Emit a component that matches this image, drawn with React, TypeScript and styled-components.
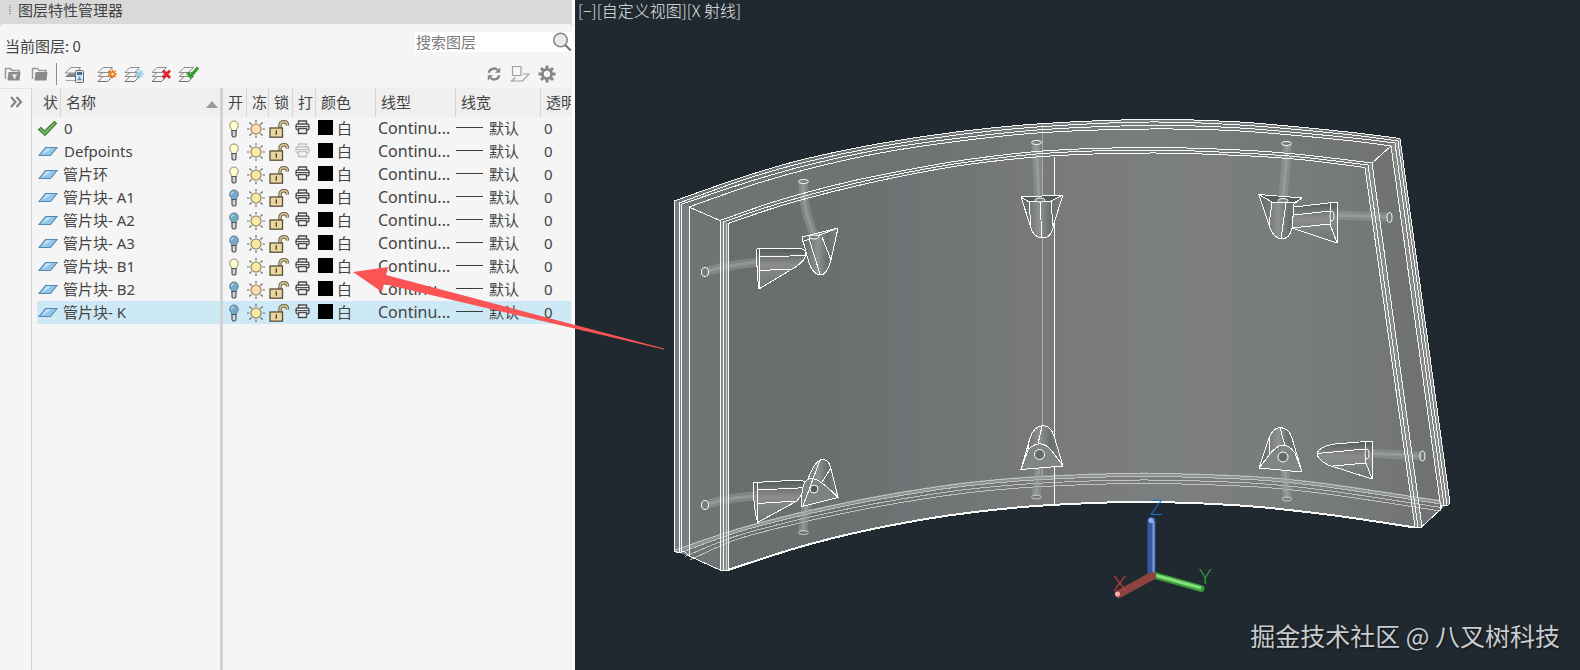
import React from "react";
import styled, { createGlobalStyle } from "styled-components";

const uiFont = `"Noto Sans", "Noto Sans CJK SC", sans-serif`;
const cjkFont = `"Noto Sans CJK SC", "Noto Sans", sans-serif`;

const GlobalStyle = createGlobalStyle`
  *, *::before, *::after { box-sizing: border-box; }
  body {
    margin: 0;
    background: #212930;
    color: #444444;
    font: 15px/20px ${uiFont};
  }
  button { border: 0; padding: 0; background: none; color: inherit; font: inherit; cursor: pointer; }
  svg { display: block; }
`;

/* ---------- page ---------- */

const Page = styled.div`
  position: relative;
  display: flex;
  min-height: 100vh;
  overflow: hidden;
`;

const Panel = styled.aside`
  display: flex;
  flex-direction: column;
  flex: 0 0 575px;
  background: #d9d9d9;
  border-right: 3px solid #fbfbfb;
`;

const TitleBar = styled.header`
  display: flex;
  align-items: center;
  gap: 6px;
  height: 24px;
  padding: 0 0 4px 8px;
`;

const Grip = styled.span`
  width: 4px;
  height: 10px;
  background: conic-gradient(#9a9a9a 25%, transparent 0) 0 0 / 3px 2px;
`;

const Title = styled.h1`
  margin: 0;
  font: 400 15px/20px ${cjkFont};
`;

const PanelBody = styled.div`
  display: flex;
  flex-direction: column;
  flex: 1;
  background: #f5f5f5;
  border-radius: 4px 4px 0 0;
`;

const TopRow = styled.div`
  display: flex;
  justify-content: space-between;
  height: 40px;
  padding: 8px 0 0 5px;
`;

const Current = styled.p`
  margin: 0;
  padding-top: 4px;
  font-family: ${cjkFont};
`;

const Search = styled.label`
  display: flex;
  align-items: flex-start;
  height: 20px;
  background: #ffffff;
`;

const SearchInput = styled.input`
  width: 137px;
  height: 20px;
  border: 0;
  padding: 0 0 1px 1px;
  background: transparent;
  outline: none;
  font: 15px/20px ${cjkFont};
  &::placeholder { color: #7c7c7c; opacity: 1; }
`;

const Toolbar = styled.div`
  display: flex;
  justify-content: space-between;
  height: 24px;
  padding: 0 16px 0 4px;
`;

const ToolGroup = styled.div<{ $gap: number }>`
  display: flex;
  align-items: center;
  gap: ${(p) => p.$gap}px;
  height: 20px;
`;

const ToolDivider = styled.span`
  width: 1px;
  height: 22px;
  background: #8c8c8c;
`;

const Content = styled.div`
  display: flex;
  flex: 1;
`;

const Rail = styled.div`
  display: flex;
  align-items: flex-start;
  justify-content: center;
  flex: 0 0 32px;
  padding-top: 7px;
  border-top: 1px solid #e2e2e2;
  border-right: 1px solid #d2d2d2;
`;

const Grid = styled.div`
  flex: 1;
  min-width: 0;
  padding-right: 1px;
  background: linear-gradient(#d2d2d2, #d2d2d2) 188px 0 / 3px 100% no-repeat;
`;

/* ---------- layer table ---------- */

const Table = styled.table`
  width: 100%;
  table-layout: fixed;
  border-collapse: separate;
  border-spacing: 0;
`;

const Th = styled.th<{ $pad: number; $edge?: "thick" | "none" }>`
  height: 29px;
  padding: 0 0 2px ${(p) => p.$pad}px;
  overflow: hidden;
  white-space: nowrap;
  text-align: left;
  font: 400 15px/20px ${cjkFont};
  background: #efefef;
  border-left: ${(p) =>
    p.$edge === "none" ? "0" : p.$edge === "thick" ? "3px solid #d2d2d2" : "1px solid #d6d6d6"};
`;

const HeadLine = styled.span`
  display: flex;
  align-items: flex-end;
  justify-content: space-between;
  padding-right: 2px;

  svg { margin-bottom: 4px; }
`;

const Row = styled.tr<{ $selected?: boolean }>`
  --row: ${(p) => (p.$selected ? "#cde9f6" : "transparent")};
`;

const Td = styled.td<{ $pad?: number; $edge?: boolean; $icon?: boolean }>`
  height: 23px;
  padding: 0 0 ${(p) => (p.$icon ? 0 : 2)}px ${(p) => p.$pad ?? 0}px;
  overflow: hidden;
  white-space: nowrap;
  line-height: 20px;
  background: var(--row);
  ${(p) => p.$edge && "border-left: 3px solid #d2d2d2;"}
`;

const StatusTd = styled(Td)`
  background-clip: content-box;
`;

const LinetypeTd = styled(Td)`
  font-size: 16px;
`;

const Toggle = styled.button`
  display: block;
`;

const Swatch = styled.span`
  width: 15px;
  height: 15px;
  background: #000000;
`;

const Inline = styled.span<{ $gap: number }>`
  display: flex;
  align-items: center;
  gap: ${(p) => p.$gap}px;
`;

const Weight = styled.span`
  width: 27px;
  height: 1px;
  background: #3c3c3c;
`;

/* ---------- viewport ---------- */

const Viewport = styled.main`
  position: relative;
  flex: 1;
  min-width: 0;
  background: #212930;
`;

const ViewLabel = styled.div`
  position: absolute;
  top: 0;
  left: 3px;
  color: #e6e8ea;
  font: 300 16px/20px ${cjkFont};
`;

const Watermark = styled.div`
  position: absolute;
  right: 20px;
  bottom: 17px;
  color: #c9cccf;
  font: 400 25px/36px ${cjkFont};
  text-shadow: 1px 1px 2px #0c1014;
`;

const Scene = styled.svg`
  width: 100%;
  height: auto;
`;

const ArrowLayer = styled.svg`
  position: absolute;
  top: 260px;
  left: 350px;
  pointer-events: none;
`;

/* ---------- icons ---------- */

const FolderIcon = ({ star }: { star?: boolean }) => (
  <svg width="18" height="16" viewBox="0 0 18 16">
    <path d="M1.500 13V2.500H6.500L8 4.500H15v2" fill="none" stroke="#9a9a9a" strokeWidth="1.500" />
    <path d="M4.500 6H16.500l-1 8.500H3.500z" fill="#8b8b8b" />
    {star && <path d="M7.500 8.500h6L11.500 10.500V12.500h-2v-2z" fill="#f4f4f4" />}
  </svg>
);

const Sheets = () => (
  <g fill="#f4f4f4" strokeWidth="1">
    <path d="M1 16.500 6 11.500H15.500L10.500 16.500z" stroke="#6f6f6f" />
    <path d="M1 11.500 6 7.500H15.500L10.500 11.500z" stroke="#8d8d8d" />
    <path d="M1 7.500 6 2.500H15.500L10.500 7.500z" stroke="#8d8d8d" />
  </g>
);

const LayerIcon = ({ kind }: { kind: "states" | "new" | "frozen" | "delete" | "current" }) => (
  <svg width="21" height="18" viewBox="0 0 21 18">
    {kind === "states" ? (
      <>
        <path d="M1 8 7 2.500H16.500L12 8z" fill="#f4f4f4" stroke="#8d8d8d" />
        <path d="M1 12 5 8.500H16V12z" fill="#808080" />
        <path d="M2 15.500H11" stroke="#a5a5a5" />
        <rect x="11.500" y="5.500" width="8" height="12" rx="1" fill="#dfe9f0" stroke="#5d6b78" />
        <rect x="13" y="7" width="5" height="3" fill="#3c6fa0" />
        <path d="M15.500 11.500v2M13.500 14.500h4" stroke="#4a86b8" strokeWidth="1.500" />
      </>
    ) : (
      <Sheets />
    )}
    {kind === "new" && (
      <g stroke="#ee7b1c" strokeWidth="1.500">
        <path d="M15.500 4.500v9M11 9h9M12.300 5.800l6.400 6.400M18.700 5.800l-6.400 6.400" />
        <circle cx="15.500" cy="9" r="2" fill="#fff3d8" />
      </g>
    )}
    {kind === "frozen" && (
      <path d="M15.500 4.500v9M11 9h9M12.300 5.800l6.400 6.400M18.700 5.800l-6.400 6.400" stroke="#9ccfe6" strokeWidth="1.500" />
    )}
    {kind === "delete" && <path d="M12 5.500l7 7.500M19 5.500l-7 7.500" stroke="#e8232f" strokeWidth="2.800" />}
    {kind === "current" && <path d="M9.500 7.500 12.500 11.500 20 2.500" fill="none" stroke="#33a02c" strokeWidth="3.200" />}
  </svg>
);

const RefreshIcon = () => (
  <svg width="16" height="16" viewBox="0 0 16 16" fill="none" stroke="#858585" strokeWidth="2.400">
    <path d="M2.800 6.800A5.200 5.200 0 0 1 11.500 4M13.200 9.200A5.200 5.200 0 0 1 4.500 12" />
    <path d="M14.200 1.500V6.800H9zM1.800 14.500V9.200H7z" fill="#858585" stroke="none" />
  </svg>
);

const ObjectIcon = () => (
  <svg width="20" height="18" viewBox="0 0 20 18" fill="none" stroke="#a0a0a0" strokeWidth="1.200">
    <path d="M2.500 1.500h8.500v9H2.500zM13 9h6L12.500 16H1.500L5.500 12.500" />
  </svg>
);

const GearIcon = () => (
  <svg width="18" height="18" viewBox="0 0 18 18">
    <g stroke="#858585" strokeWidth="3">
      <path d="M9 .5v17M.5 9h17M3 3l12 12M15 3 3 15" />
    </g>
    <circle cx="9" cy="9" r="6" fill="#858585" />
    <circle cx="9" cy="9" r="3.200" fill="#f5f5f5" />
  </svg>
);

const MagnifierIcon = () => (
  <svg width="20" height="20" viewBox="0 0 20 20">
    <circle cx="8.500" cy="8" r="6.800" fill="#e9e9e9" stroke="#858585" strokeWidth="1.500" />
    <path d="M13.200 13l5.600 5.500" stroke="#6f6f6f" strokeWidth="2" />
  </svg>
);

const ChevronsIcon = () => (
  <svg width="14" height="12" viewBox="0 0 14 12" fill="none" stroke="#858585" strokeWidth="2.200">
    <path d="M2 1l4.500 5L2 11M7.500 1 12 6l-4.500 5" />
  </svg>
);

const CheckIcon = () => (
  <svg width="21" height="17" viewBox="0 0 21 17">
    <path d="M1.500 9.500 4 7.500 7.500 11 17.500 1.500 19.500 3.500 8 15.500z" fill="#7ab568" stroke="#3d7c37" strokeWidth="1.100" />
  </svg>
);

const PlaneIcon = () => (
  <svg width="21" height="11" viewBox="0 0 21 11">
    <path d="M2 9.500 8.500 1.500H20L13.500 9.500z" fill="#93c6e8" stroke="#5089b3" strokeWidth="1.100" />
    <path d="M5 8.500 9.500 2.500h5z" fill="#c8e3f4" />
  </svg>
);

const BulbIcon = ({ on }: { on: boolean }) => (
  <svg width="12" height="18" viewBox="0 0 12 18">
    <path
      d="M6 1a4.300 4.300 0 0 0-4.300 4.500C1.700 8 4 8.500 4 11.500h4C8 8.500 10.300 8 10.300 5.500A4.300 4.300 0 0 0 6 1z"
      fill={on ? "#fefcd0" : "#77a9c6"}
      stroke={on ? "#8d8a6c" : "#5b7c90"}
      strokeWidth="1"
    />
    {!on && <path d="M3.500 5.500A2.500 2.500 0 0 1 6 3" fill="none" stroke="#c3deec" strokeWidth="1.200" />}
    <path d="M4 10.500h4v5.300L7 17H5l-1-1.200z" fill="#d3d6d8" stroke="#505458" strokeWidth="1.200" />
  </svg>
);

const SunIcon = ({ warm }: { warm?: boolean }) => (
  <svg width="18" height="18" viewBox="0 0 18 18">
    <path
      d="M9 0v2.500M9 15.500V18M0 9h2.500M15.500 9H18M2.500 2.500l2 2M13.500 13.500l2 2M15.500 2.500l-2 2M4.500 13.500l-2 2"
      stroke="#6d6a62"
      strokeWidth="1.200"
    />
    <circle cx="9" cy="9" r="5" fill={warm ? "#ffdcae" : "#f8eaa2"} stroke="#8c8263" strokeWidth="1.100" />
  </svg>
);

const LockIcon = () => (
  <svg width="21" height="18" viewBox="0 0 21 18">
    <path d="M11 8V5.500C11 2.800 12.700 1.800 14.800 1.800S18.500 3 18.500 5.500" fill="none" stroke="#6a6149" strokeWidth="3.400" />
    <path d="M11 8V5.500C11 2.800 12.700 1.800 14.800 1.800S18.500 3 18.500 5.500" fill="none" stroke="#ddcd98" strokeWidth="1.400" />
    <rect x="1" y="8" width="12.500" height="9.200" fill="#e9d6a2" stroke="#584f38" strokeWidth="1.300" />
    <path d="M7.300 10.300v4.500" stroke="#5c4c25" strokeWidth="1.400" />
  </svg>
);

const PrinterIcon = ({ dim }: { dim?: boolean }) => (
  <svg width="15" height="15" viewBox="0 0 15 15" opacity={dim ? 0.3 : 1}>
    <g fill="#f1f1f1" stroke="#484c50" strokeWidth="1.300">
      <path d="M3.500 4.500V1h8v3.500" />
      <rect x="1" y="4" width="13" height="6" rx="2" />
      <path d="M3.500 8.500h8v5h-8z" />
    </g>
    <path d="M1 6.500h13" stroke="#484c50" />
  </svg>
);

/* ---------- data ---------- */

type Layer = { name: string; on: boolean; current?: boolean; noPlot?: boolean; warm?: boolean; selected?: boolean };

const layers: Layer[] = [
  { name: "0", on: true, current: true, warm: true },
  { name: "Defpoints", on: true, noPlot: true },
  { name: "管片环", on: true },
  { name: "管片块- A1", on: false },
  { name: "管片块- A2", on: false },
  { name: "管片块- A3", on: false },
  { name: "管片块- B1", on: true },
  { name: "管片块- B2", on: false, warm: true },
  { name: "管片块- K", on: false, selected: true },
];

const columnWidths = [28, 160, 26, 22, 24, 23, 60, 80, 85];

const LayerTable = () => (
  <Table>
    <colgroup>
      {columnWidths.map((w, i) => (
        <col key={i} width={w} />
      ))}
      <col />
    </colgroup>
    <thead>
      <tr>
        <Th $pad={11} $edge="none">状</Th>
        <Th $pad={5}>
          <HeadLine>
            名称
            <svg width="12" height="7" viewBox="0 0 12 7">
              <path d="M0 7 6 0l6 7z" fill="#9a9a9a" />
            </svg>
          </HeadLine>
        </Th>
        <Th $pad={5} $edge="thick">开</Th>
        <Th $pad={5}>冻</Th>
        <Th $pad={5}>锁</Th>
        <Th $pad={5}>打</Th>
        <Th $pad={5}>颜色</Th>
        <Th $pad={5}>线型</Th>
        <Th $pad={5}>线宽</Th>
        <Th $pad={5}>透明</Th>
      </tr>
    </thead>
    <tbody>
      {layers.map((l) => (
        <Row key={l.name} $selected={l.selected}>
          <StatusTd $pad={5} $icon>{l.current ? <CheckIcon /> : <PlaneIcon />}</StatusTd>
          <Td $pad={l.name.startsWith("管") ? 3 : 4}>{l.name}</Td>
          <Td $pad={5} $edge $icon>
            <Toggle aria-label="开"><BulbIcon on={l.on} /></Toggle>
          </Td>
          <Td $pad={1} $icon>
            <Toggle aria-label="冻结"><SunIcon warm={l.warm} /></Toggle>
          </Td>
          <Td $pad={1} $icon>
            <Toggle aria-label="锁定"><LockIcon /></Toggle>
          </Td>
          <Td $pad={3}>
            <Toggle aria-label="打印"><PrinterIcon dim={l.noPlot} /></Toggle>
          </Td>
          <Td $pad={3}>
            <Inline $gap={4}><Swatch />白</Inline>
          </Td>
          <LinetypeTd $pad={3}>Continu...</LinetypeTd>
          <Td $pad={1}>
            <Inline $gap={6}><Weight />默认</Inline>
          </Td>
          <Td $pad={4}>0</Td>
        </Row>
      ))}
    </tbody>
  </Table>
);

/* ---------- ring segment model ---------- */

type P = [number, number];

// Catmull-Rom curve through the points, as cubic segments.
const curve = (pts: P[], start: "M" | "L" = "M") => {
  let d = `${start}${pts[0][0]} ${pts[0][1]}`;
  for (let i = 0; i < pts.length - 1; i++) {
    const a = pts[Math.max(i - 1, 0)];
    const b = pts[i];
    const c = pts[i + 1];
    const e = pts[Math.min(i + 2, pts.length - 1)];
    d += `C${b[0] + (c[0] - a[0]) / 6} ${b[1] + (c[1] - a[1]) / 6} ${c[0] - (e[0] - b[0]) / 6} ${c[1] - (e[1] - b[1]) / 6} ${c[0]} ${c[1]}`;
  }
  return d;
};

const arch = (xs: number[], ys: number[]): P[] => xs.map((x, i) => [x, ys[i]]);

const outerTop: P[][] = [
  arch([674, 743, 803, 880, 960, 1044, 1150, 1240, 1343, 1400], [201, 177, 159.5, 143.5, 131.5, 123.5, 119.5, 122, 131.5, 138.5]),
  arch([679, 746, 806, 880, 960, 1044, 1150, 1240, 1343, 1398], [203, 179, 162, 146.5, 134.5, 126.5, 122, 125, 134, 141]),
  arch([682, 748, 808, 880, 960, 1044, 1150, 1240, 1343, 1395], [204, 182, 165, 149.5, 138, 129.5, 125.5, 128, 137, 143]),
  arch([689, 752, 812, 880, 960, 1044, 1150, 1240, 1343, 1391], [207, 185, 168, 153, 141, 132.5, 129, 131, 140, 146]),
];

const innerTop: P[][] = [
  arch([720, 780, 850, 920, 975, 1050, 1150, 1240, 1300, 1372], [220.5, 200, 181.5, 167.5, 158.5, 150.5, 147.5, 150, 154.5, 163]),
  arch([723, 782, 852, 920, 975, 1050, 1150, 1240, 1300, 1368], [222, 202.5, 184, 170, 161, 153, 150, 153, 157, 165]),
  arch([728, 785, 854, 920, 975, 1050, 1150, 1240, 1300, 1365], [223.5, 204.5, 186.5, 172.5, 163.5, 156, 153, 155.5, 159.5, 167.5]),
];

const lowerFront: P[] = arch([728, 793, 850, 920, 975, 1043, 1140, 1240, 1327, 1415], [570, 549, 534, 520, 512, 505.5, 502, 505.5, 514.5, 527.5]);

const backX = [675, 735, 793, 860, 920, 975, 1043, 1140, 1240, 1293, 1345, 1441];
const backY = [550, 530, 514.5, 500, 489.5, 482, 476.5, 473.5, 476, 480, 486.5, 501];

const backArc = (d: number): P[] => arch(backX.map((x, i) => (i === 0 ? x + d * 1.5 : x)), backY.map((y) => y + d));

const silhouette =
  curve(outerTop[0]) +
  "L1450 503 1441 509 1421 527" +
  curve([...lowerFront].reverse(), "L") +
  "L720 570 689 556 674 551Z";

const face =
  curve(innerTop[2]) + "L1415 527" + curve([...lowerFront].reverse(), "L") + "Z";

const Tube = ({ d }: { d: string }) => (
  <g fill="none">
    <path d={d} stroke="#a0a4a1" strokeOpacity=".42" strokeWidth="9" />
    <path d={d} stroke="#a9aca9" strokeOpacity=".45" strokeWidth="3" />
  </g>
);

const Eye = ({ x, y, rx, ry, fill = "#777b7a" }: { x: number; y: number; rx: number; ry: number; fill?: string }) => (
  <ellipse cx={x} cy={y} rx={rx} ry={ry} fill={fill} stroke="#ffffff" shapeRendering="auto" />
);

const Segment = () => (
  <g>
    <path d={silhouette} fill="url(#body)" />
    <path d={face} fill="url(#face)" />
    <path d="M674 201 689 207V556L674 551z" fill="#7d8787" fillOpacity=".6" />
    <path d="M720 220 728 223V570H720z" fill="#838a89" />
    <path d="M1365 167 1372 163 1422 527H1415z" fill="#868b8a" />
    <path d="M1391 146 1400 138 1450 503 1441 507z" fill="#858a89" />

    <g fill="none" stroke="#bec1c0" shapeRendering="crispEdges">
      <path d={curve(backArc(1))} stroke="#8f9393" strokeWidth="4" />
      {[0, 3, 6.5, 10].map((d) => (
        <path key={d} d={curve(backArc(d))} />
      ))}
      <path d="M1042.500 124V480" stroke="#a9acac" />
    </g>

    <g>
      <Tube d="M803 181C803 208 809 222 815 238" />
      <Tube d="M705 272C722 266 740 264 757 262" />
      <Tube d="M705 505C722 499 740 497 755 496" />
      <Tube d="M814 490C806 502 804 515 803 532" />
      <Tube d="M1036 143 1039 199" />
      <Tube d="M1040 456 1036 496" />
      <Tube d="M1287 143C1287 160 1284 180 1283 200" />
      <Tube d="M1284 458 1287 498" />
      <Tube d="M1332 215 1388 217" />
      <Tube d="M1367 453 1422 456" />
    </g>

    <g fill="none" stroke="#f7f8f8" shapeRendering="crispEdges">
      {[...outerTop, ...innerTop].map((pts, i) => (
        <path key={i} d={curve(pts)} />
      ))}
      <path d={curve(lowerFront)} strokeWidth="2" />
      <path d="M689 207 720 220.500M1372 163 1391 146" />
      <path d="M674 551 679 553 684 551 689 556 720 570H728M1415 527.500H1421L1441 509V505H1448L1450 503" />
      <path d="M1400 138.500 1450 503M1398 141 1447 505M1395 143 1444 505M1391 146 1441 509" />
      <path d="M1365 167.500 1415 527M1368 165 1418 527M1372 163 1422 527" />
    </g>
    <path
      d="M674.500 201V551M679.500 203V553M681.500 204V552M689.500 207V556M720.500 220V570M723.500 222V570M728.500 223V570M1054.500 157V506"
      fill="none"
      stroke="#f7f8f8"
    />
    <path d="M726.500 223V570" stroke="#dfe2e2" strokeOpacity=".8" />

    <g stroke="#ffffff" strokeLinejoin="round" shapeRendering="crispEdges">
      {/* upper left pockets */}
      <path d="M757 249 800 248.500Q808 250 805 257Q802 264 792 269L759 289Q756 270 757 249z" fill="url(#pocketH)" />
      <path d="M759 249V289M759 257 805 255.500M759 270.500 792 269" fill="none" />
      <path d="M802 237 838 228 831 260Q827 275 820 275Q813 274 809 263z" fill="url(#pocketV)" />
      <path d="M802 242 809 239 838 228M809 239 820 274M822 237 831 260" fill="none" />
      <Eye x={814} y={237} rx={5} ry={2} />

      {/* lower left pockets */}
      <path d="M753.500 482.500 800 480Q806 481 808 486L797 501 757.500 522.500Q753 505 753.500 482.500z" fill="url(#pocketH)" />
      <path d="M757.500 482V522.500M757.500 490 808 487.500M757.500 503.500 797 501" fill="none" />
      <path d="M802 506.500 807 482Q814 461 822 459.500Q829 459 831 469L838 497.500z" fill="url(#pocketV)" />
      <path d="M802 506.500Q800 478 812 478.500Q820 479 838 497.500z" fill="#7f8282" />
      <path d="M803 506 820 460M822 482 831 468" fill="none" />
      <Eye x={814} y={489} rx={4} ry={4} fill="#555958" />

      {/* middle pockets */}
      <path d="M1021 197 1063 195 1054 223Q1052 238 1042.500 238Q1033 237 1031 228z" fill="url(#pocketV)" />
      <path d="M1021 197 1063 195 1051 201 1029 202z" fill="#565a5b" />
      <path d="M1029 202 1031 228M1051 201 1053 226M1040 202 1042 238" fill="none" />
      <Eye x={1040} y={200} rx={5} ry={2} />
      <path d="M1021 469.500 1030 438Q1034 426 1043 425.500Q1051 426 1054 436L1063 466z" fill="url(#pocketV)" />
      <path d="M1021 469.500 1028 450Q1040 437 1052 451L1063 466z" fill="#828585" />
      <path d="M1028 450V443M1042 426 1038 444" fill="none" />
      <Eye x={1039.5} y={454.5} rx={5} ry={5} fill="#666a6a" />

      {/* upper right pockets */}
      <path d="M1294 207 1337 202V243L1292 228z" fill="url(#pocketH)" />
      <path d="M1330 203V224L1337 243M1294 215 1330 211M1292 228 1330 224" fill="none" />
      <Eye x={1332} y={216} rx={2} ry={5} />
      <path d="M1259 194.500 1302 198 1294 204 1292 228Q1290 239 1281 239Q1273 238 1269 225z" fill="url(#pocketV)" />
      <path d="M1259 194.500 1302 198 1294 203 1272 202z" fill="#565a5b" />
      <path d="M1272 202 1269 225M1286 203 1281 239" fill="none" />
      <Eye x={1283} y={200.5} rx={5} ry={2} />

      {/* lower right pockets */}
      <path d="M1259 468 1269 438Q1273 428 1280 427.500Q1289 428 1292 438L1302 472z" fill="url(#pocketV)" />
      <path d="M1259 468 1270 454Q1283 437 1295 453L1302 472z" fill="#828585" />
      <path d="M1270 454 1269 438M1280 427.500 1285 446" fill="none" />
      <Eye x={1283} y={457} rx={5} ry={5} fill="#666a6a" />
      <path d="M1317 453Q1320 446 1335 444L1372 441V479L1328 465Q1317 459 1317 453z" fill="url(#pocketH)" />
      <path d="M1365 442 1366 463 1372 479M1317 453.500 1365 449M1333 466 1366 463" fill="none" />
      <Eye x={1367} y={454} rx={2} ry={5} />
    </g>

    <Eye x={803.5} y={181.5} rx={5} ry={2} />
    <Eye x={705} y={272} rx={3.5} ry={4.5} />
    <Eye x={705} y={505} rx={3.5} ry={4.5} />
    <Eye x={1036.5} y={142.5} rx={5} ry={2} />
    <Eye x={1286.5} y={143.5} rx={5} ry={2} />
    <Eye x={1389.5} y={217.5} rx={2.5} ry={5} />
    <Eye x={1422.5} y={456} rx={2.5} ry={5} />
    <g fill="none" stroke="#c9cccb">
      <ellipse cx="803.500" cy="532.500" rx="5" ry="2" />
      <ellipse cx="1036.500" cy="497" rx="5" ry="2" />
      <ellipse cx="1287" cy="499" rx="5" ry="2" />
    </g>
  </g>
);

const axisText = { fontFamily: "Lato, sans-serif", fontWeight: 300, fontSize: 21 };

const Axes = () => (
  <g>
    <path d="M1151.500 521V574" stroke="#34599f" strokeWidth="8" strokeLinecap="round" />
    <path d="M1153.500 521V572" stroke="#7e9fd6" strokeWidth="2" />
    <circle cx="1151" cy="520.500" r="2.500" fill="#8fb4f2" />
    <path d="M1155 575.500 1201 588.500" stroke="#3b9a3b" strokeWidth="7" strokeLinecap="round" />
    <path d="M1156 575.500 1201 588" stroke="#83e07b" strokeWidth="3" />
    <path d="M1152 576 1119 594" stroke="#8f4341" strokeWidth="8" strokeLinecap="round" />
    <circle cx="1117.500" cy="594" r="2.500" fill="#f0aeb0" />
    <text x="1113" y="591" fill="#d8403c" {...axisText}>X</text>
    <text x="1199" y="584" fill="#2fb336" {...axisText}>Y</text>
    <text x="1150" y="515" fill="#1c6fd6" {...axisText}>Z</text>
  </g>
);

const Model = () => (
  <Scene viewBox="575 0 1005 670" role="img" aria-label="管片三维模型">
    <defs>
      <linearGradient id="body" x1="0" x2="1" y1="0" y2="0">
        <stop offset="0" stopColor="#6f7475" />
        <stop offset=".3" stopColor="#6f7273" />
        <stop offset=".6" stopColor="#7a7d7e" />
        <stop offset="1" stopColor="#6e7071" />
      </linearGradient>
      <linearGradient id="face" x1="0" x2="1" y1="0" y2="0">
        <stop offset="0" stopColor="#6a6d6e" />
        <stop offset=".22" stopColor="#6d7071" />
        <stop offset=".26" stopColor="#6e7475" />
        <stop offset=".3" stopColor="#717475" />
        <stop offset=".45" stopColor="#77797a" />
        <stop offset=".6" stopColor="#7b7d7e" />
        <stop offset=".61" stopColor="#797f7f" />
        <stop offset=".66" stopColor="#797f7f" />
        <stop offset=".67" stopColor="#7c7e7f" />
        <stop offset=".85" stopColor="#787b7b" />
        <stop offset="1" stopColor="#727475" />
      </linearGradient>
      <linearGradient id="pocketV" x1="0" x2="1" y1="0" y2="0">
        <stop offset="0" stopColor="#5f6364" />
        <stop offset=".45" stopColor="#8e9091" />
        <stop offset=".7" stopColor="#6a6e6f" />
        <stop offset="1" stopColor="#7e8283" />
      </linearGradient>
      <linearGradient id="pocketH" x1="0" x2="0" y1="0" y2="1">
        <stop offset="0" stopColor="#55595a" />
        <stop offset=".4" stopColor="#8a8c8d" />
        <stop offset="1" stopColor="#6e7273" />
      </linearGradient>
    </defs>
    <Segment />
    <Axes />
  </Scene>
);

export default function App() {
  return (
    <Page>
      <GlobalStyle />
      <Panel>
        <TitleBar>
          <Grip />
          <Title>图层特性管理器</Title>
        </TitleBar>
        <PanelBody>
          <TopRow>
            <Current>当前图层: 0</Current>
            <Search>
              <SearchInput type="search" placeholder="搜索图层" aria-label="搜索图层" />
              <MagnifierIcon />
            </Search>
          </TopRow>
          <Toolbar>
            <ToolGroup $gap={12}>
              <ToolGroup $gap={7}>
                <ToolGroup $gap={9}>
                  <button aria-label="新建特性过滤器"><FolderIcon star /></button>
                  <button aria-label="新建组过滤器"><FolderIcon /></button>
                </ToolGroup>
                <ToolDivider />
                <button aria-label="图层状态管理器"><LayerIcon kind="states" /></button>
              </ToolGroup>
              <ToolGroup $gap={6}>
                <button aria-label="新建图层"><LayerIcon kind="new" /></button>
                <button aria-label="在所有视口中都被冻结的新图层"><LayerIcon kind="frozen" /></button>
                <button aria-label="删除图层"><LayerIcon kind="delete" /></button>
                <button aria-label="置为当前"><LayerIcon kind="current" /></button>
              </ToolGroup>
            </ToolGroup>
            <ToolGroup $gap={8}>
              <button aria-label="刷新"><RefreshIcon /></button>
              <button aria-label="切换替代亮显"><ObjectIcon /></button>
              <button aria-label="设置"><GearIcon /></button>
            </ToolGroup>
          </Toolbar>
          <Content>
            <Rail>
              <button aria-label="展开图层过滤器树"><ChevronsIcon /></button>
            </Rail>
            <Grid>
              <LayerTable />
            </Grid>
          </Content>
        </PanelBody>
      </Panel>
      <Viewport>
        <Model />
        <ViewLabel>[−][自定义视图][X 射线]</ViewLabel>
        <Watermark>掘金技术社区 @ 八叉树科技</Watermark>
      </Viewport>
      <ArrowLayer width="320" height="94" viewBox="350 260 320 94">
        <path d="M353 272 388 267 386 275 664 348.500V349.500L384 284 382 292z" fill="#fb5454" />
      </ArrowLayer>
    </Page>
  );
}
